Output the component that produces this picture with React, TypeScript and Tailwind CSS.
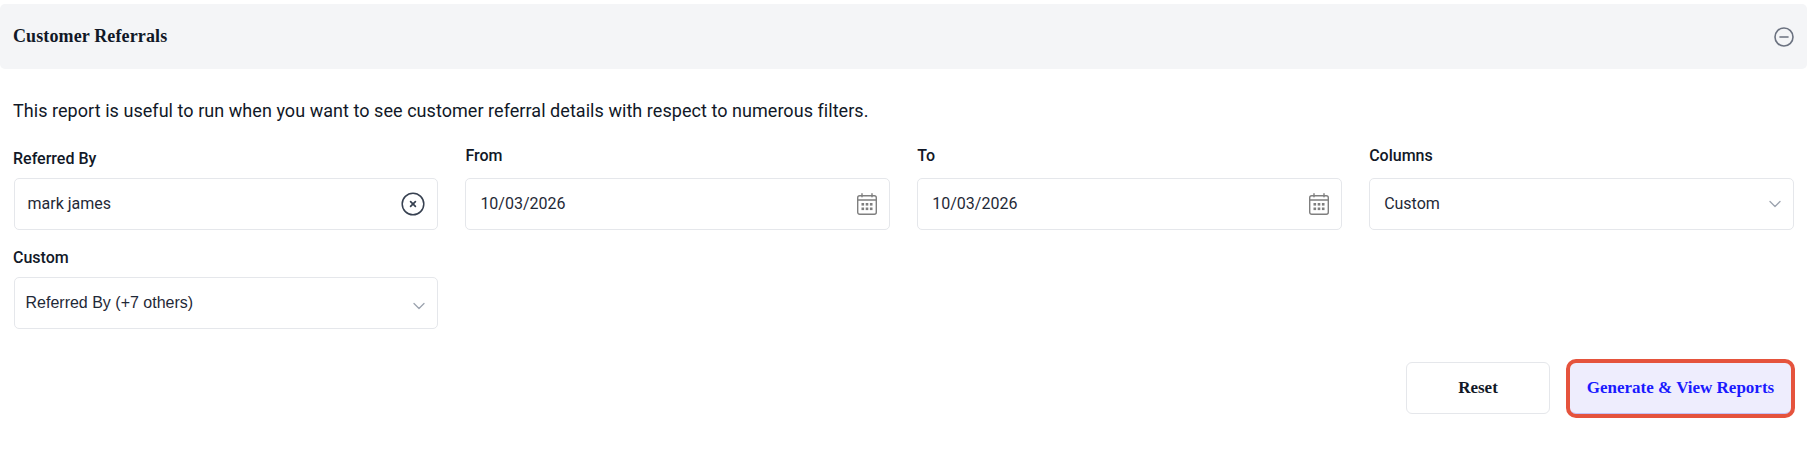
const chevron = (
	<svg width="16" height="16" viewBox="0 0 16 16" fill="none" stroke="#9ca3af" strokeWidth="1.3" strokeLinecap="round" strokeLinejoin="round">
		<path d="M3 5.5L8 10.5l5-5" />
	</svg>
);

const clearIcon = (
	<svg width="24" height="24" viewBox="0 0 24 24" fill="none" stroke="#374151" strokeWidth="1.5" strokeLinecap="round">
		<circle cx="12" cy="12" r="10.8" />
		<path d="M9.6 9.6l4.8 4.8M14.4 9.6l-4.8 4.8" strokeWidth="1.7" />
	</svg>
);

const calendarIcon = (
	<svg width="20" height="22" viewBox="0 0 20 22" fill="none" stroke="#7f7f7f" strokeWidth="1.4" strokeLinecap="round">
		<rect x="0.7" y="2.7" width="18.6" height="18.6" rx="2" />
		<path d="M0.7 7h18.6M5 0.7v3M15 0.7v3" />
		<g fill="#7f7f7f" stroke="none">
			<rect x="4.5" y="10" width="2.6" height="2.6" />
			<rect x="8.7" y="10" width="2.6" height="2.6" />
			<rect x="12.9" y="10" width="2.6" height="2.6" />
			<rect x="4.5" y="14.5" width="2.6" height="2.6" />
			<rect x="8.7" y="14.5" width="2.6" height="2.6" />
			<rect x="12.9" y="14.5" width="2.6" height="2.6" />
		</g>
	</svg>
);

type FieldProps = {
	label: string;
	value: string;
	icon: React.ReactNode;
	labelClass: string;
	valueClass: string;
	iconClass: string;
};

const Field: React.FC<FieldProps> = ({ label, value, icon, labelClass, valueClass, iconClass }) => (
	<div className="flex flex-col">
		<label className={`block text-[16px] font-medium leading-[20px] text-[#111827] ${labelClass}`}>{label}</label>
		<div className={`flex h-[52px] items-center justify-between rounded-[5px] border border-[#e5e7eb] bg-white text-[16px] text-[#1f2937] ${valueClass}`}>
			<span>{value}</span>
			<span className={`flex items-center ${iconClass}`}>{icon}</span>
		</div>
	</div>
);

const App: React.FC = () => {
	return (
		<div className="h-[466px] w-[1812px] overflow-hidden bg-white pt-[4px] font-['Roboto',sans-serif]">
			<div className="flex h-[65px] w-[1807px] items-center justify-between rounded-[5px] bg-[#f4f5f7] pl-[13px] pr-[13px]">
				<h2 className="font-['Liberation_Serif',serif] text-[18px] font-bold tracking-[0.12px] text-[#111827]">Customer Referrals</h2>
				<svg width="20" height="20" viewBox="0 0 20 20" fill="none" stroke="#6b7280" strokeWidth="1.6" strokeLinecap="round">
					<circle cx="10" cy="10" r="9" />
					<path d="M6 10h8" />
				</svg>
			</div>

			<div className="pl-[13.5px] pr-[18px]">
				<p className="-ml-[0.5px] mt-[30px] text-[18px] leading-[24px] tracking-[0.05px] text-[#111827]">
					This report is useful to run when you want to see customer referral details with respect to numerous filters.
				</p>

				<div className="mt-[22px] grid grid-cols-4 gap-x-[27px] gap-y-[17px]">
					<Field label="Referred By" value="mark james" icon={clearIcon} labelClass="-ml-[0.5px] h-[33px] pt-[4px]" valueClass="pl-[13px]" iconClass="mr-[12px]" />
					<Field label="From" value="10/03/2026" icon={calendarIcon} labelClass="h-[33px] pt-[1px]" valueClass="pl-[14px]" iconClass="mr-[12px]" />
					<Field label="To" value="10/03/2026" icon={calendarIcon} labelClass="h-[33px] pt-[1px]" valueClass="pl-[14px]" iconClass="mr-[12px]" />
					<Field label="Columns" value="Custom" icon={chevron} labelClass="h-[33px] pt-[1px]" valueClass="pl-[14px]" iconClass="mr-[10px]" />
					<Field label="Custom" value="Referred By (+7 others)" icon={chevron} labelClass="-ml-[0.5px] h-[30px] pt-[1px]" valueClass="pl-[11px] font-['Liberation_Sans',sans-serif]" iconClass="mr-[10px] mt-[6px]" />
				</div>

				<div className="mt-[33px] flex items-end justify-end gap-[20px] pr-[3px]">
					<button className="h-[52px] w-[144px] rounded-[6px] border border-[#e5e7eb] bg-white font-['Liberation_Serif',serif] text-[17px] font-bold text-[#111827]">
						Reset
					</button>
					<button className="h-[51px] w-[221px] rounded-[6px] border-b border-[#c4c0f7] bg-[#eeedfd] font-['Liberation_Serif',serif] text-[17px] font-bold text-[#1a1aff] outline-[4px] outline-[#e5533d]">
						Generate &amp; View Reports
					</button>
				</div>
			</div>
		</div>
	);
};

export default App;
